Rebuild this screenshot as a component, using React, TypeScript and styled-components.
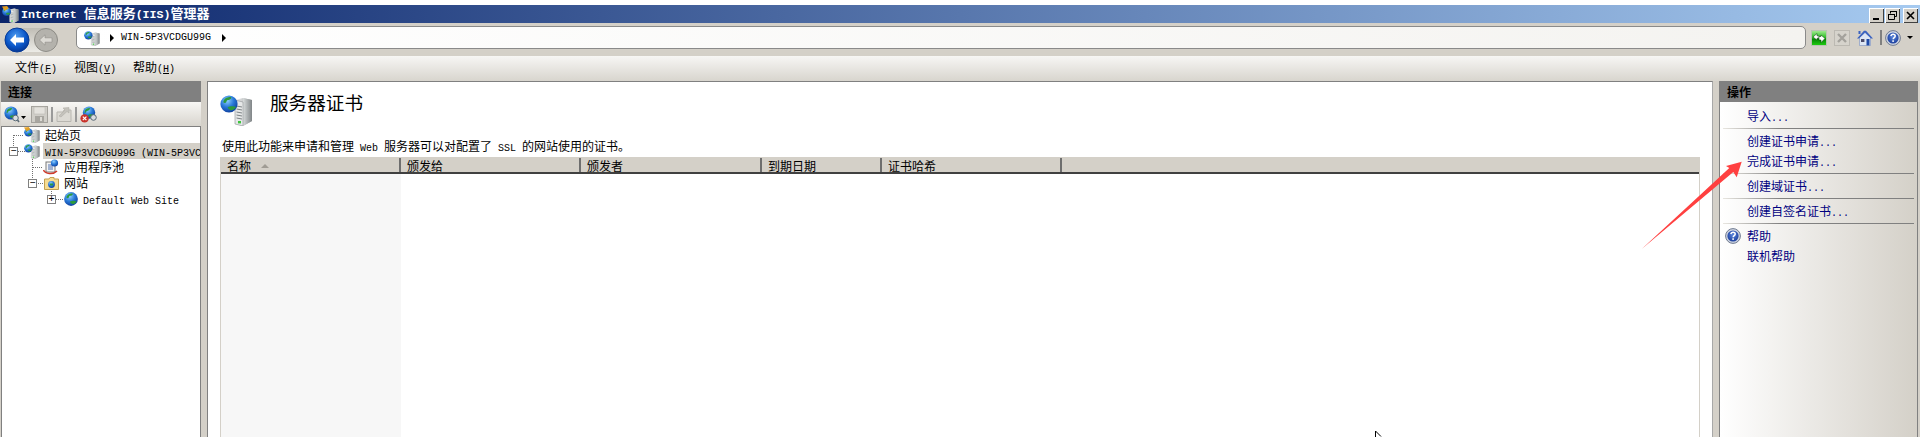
import React from "react";
import styled, { createGlobalStyle } from "styled-components";

const Global = createGlobalStyle`
  html, body { margin: 0; padding: 0; background: #fff; }
  body { font-family: "Noto Sans CJK SC", "Liberation Sans", sans-serif; font-size: 12px; color: #000; }
  * { box-sizing: border-box; }
`;

const Page = styled.div`
  position: relative; width: 1920px; height: 437px; overflow: hidden;
  display: flex; flex-direction: column; background: #d4d0c8; padding-top: 5px;
  box-shadow: inset 0 5px 0 #fff;
`;
const Lat = styled.span`
  font-family: "Liberation Mono", monospace; font-size: 10px;
`;
const TitleBar = styled.div`
  height: 18px; display: flex; align-items: center; padding: 0 2px;
  background: linear-gradient(90deg, #0a246a 0%, #a6caf0 100%); flex: none;
`;
const TitleText = styled.div`
  margin-left: 2px; color: #fff; font-size: 13px; font-weight: 700; line-height: 18px; white-space: pre; flex: 1;
`;
const TitleLat = styled.span`
  font-family: "Liberation Mono", monospace; font-size: 11.6px; font-weight: 700;
`;
const WinButtons = styled.div`
  display: flex; gap: 1px; margin-top: 2px;
`;
const WinBtn = styled.div<{ $mr?: number }>`
  width: 15px; height: 15px; background: #d4d0c8; margin-right: ${p => p.$mr ?? 0}px;
  box-shadow: inset 1px 1px 0 #fff, inset -1px -1px 0 #404040;
  display: flex; align-items: center; justify-content: center;
`;
const NavBar = styled.div`
  height: 33px; flex: none; display: flex; align-items: center; padding-left: 4px; background: #d4d0c8;
`;
const AddressBox = styled.div`
  margin-left: 16px; width: 1730px; height: 23px; border: 1px solid #8a8a8a; border-radius: 5px;
  background: linear-gradient(90deg, #fff, #f4f3f0); display: flex; align-items: center; padding-left: 7px;
  margin-top: -4px;
`;
const Crumb = styled.span`
  font-family: "Liberation Mono", monospace; font-size: 10px; margin: 0 8px 0 7px;
`;
const Tri = styled.span<{ $ml?: number }>`
  width: 0; height: 0; border-left: 4px solid #000; border-top: 4px solid transparent; border-bottom: 4px solid transparent;
  margin-left: ${p => p.$ml ?? 10}px;
`;
const NavTools = styled.div`
  display: flex; align-items: center; margin-left: 5px; margin-top: -4px;
`;
const NavSep = styled.div`
  width: 2px; height: 15px; background: #808080; margin: 0 3px 0 7px;
`;
const DownCaret = styled.span`
  width: 0; height: 0; border-top: 3px solid #000; border-left: 3px solid transparent; border-right: 3px solid transparent; margin-left: 6px;
`;
const MenuBar = styled.div`
  height: 25px; flex: none; display: flex; align-items: center; padding-left: 15px; padding-bottom: 2px; gap: 19px;
  background: linear-gradient(180deg, #f7f6f4 0%, #d8d5ce 100%);
`;
const MenuItem = styled.span`
  font-size: 12px; line-height: 23px; width: 40px; white-space: pre;
`;
const Hot = styled.span` text-decoration: underline; `;
const Main = styled.div`
  flex: 1; display: flex; min-height: 0; padding-right: 2px;
`;
const LeftPanel = styled.div`
  width: 201px; flex: none; display: flex; flex-direction: column; padding-left: 1px;
`;
const PanelHead = styled.div`
  height: 21px; flex: none; background: #808080; font-size: 12px; font-weight: 700; line-height: 21px; padding-left: 7px; color: #000;
`;
const ToolStrip = styled.div`
  height: 25px; flex: none; display: flex; align-items: center; padding-left: 3px;
  background: linear-gradient(180deg, #f8f7f5, #d8d5ce);
  border-bottom: 1px solid #808080;
`;
const ToolSep = styled.div`
  width: 2px; height: 15px; background: #9a9a9a; margin: 0 3px;
`;
const Tree = styled.div`
  position: relative; flex: 1; background: #fff; border-left: 1px solid #808080; border-right: 1px solid #808080;
  overflow: hidden;
`;
const TreeRow = styled.div<{ $indent: number }>`
  height: 16px; display: flex; align-items: center; padding-left: ${p => p.$indent}px; white-space: nowrap; position: relative;
`;
const RowLabel = styled.span<{ $sel?: boolean; $ml?: number }>`
  margin-left: ${p => p.$ml ?? 3}px; padding-left: 2px; height: 16px; line-height: 15px; font-size: 12px; flex: ${p => (p.$sel ? 1 : "none")};
  background: ${p => (p.$sel ? "#d4d0c8" : "transparent")}; overflow: hidden;
`;
const Lines = styled.svg`
  position: absolute; left: 0; top: 0; pointer-events: none;
`;
const Expander = styled.span<{ $left: number }>`
  position: absolute; left: ${p => p.$left}px; width: 9px; height: 9px; top: 4px; background: #fff; border: 1px solid #808080;
  display: flex; align-items: center; justify-content: center; z-index: 1;
  font-family: "Liberation Mono", monospace; font-size: 10px; line-height: 7px;
`;
const Center = styled.div`
  margin-left: 6px; width: 1506px; flex: none; background: #fff; border: 1px solid #808080; border-bottom: 0; border-right-color: #a8a8a8;
  display: flex; flex-direction: column; padding-left: 12px; padding-right: 12px;
`;
const HeadRow = styled.div`
  display: flex; align-items: flex-start; padding-top: 11px; height: 45px; flex: none;
`;
const BigTitle = styled.div`
  margin-left: 17px; font-size: 18.6px; line-height: 22px; margin-top: -2px;
`;
const Desc = styled.div`
  margin-top: 13px; padding-left: 2px; line-height: 11px; height: 14px; flex: none; white-space: pre;
`;
const Table = styled.div`
  margin-top: 3px; flex: 1; display: flex; flex-direction: column; border: 1px solid #d4d0c8; border-bottom: 0; width: 1480px;
`;
const THead = styled.div`
  height: 16px; flex: none; display: flex; background: #d4d0c8; border-bottom: 2px solid #404040;
`;
const Th = styled.div<{ $w?: number }>`
  width: ${p => (p.$w ? `${p.$w}px` : "auto")}; flex: ${p => (p.$w ? "none" : 1)};
  padding-left: 6px; padding-top: 1px; line-height: 14px; font-size: 12px; display: flex; align-items: center;
  border-right: ${p => (p.$w ? "2px solid #6e6e6e" : "0")};
`;
const SortUp = styled.span`
  width: 0; height: 0; margin-left: 10px; border-bottom: 4px solid #a09c94; border-left: 4px solid transparent; border-right: 4px solid transparent;
`;
const TBody = styled.div` flex: 1; display: flex; `;
const FirstCol = styled.div` width: 180px; background: #f7f7f7; `;
const Right = styled.div`
  margin-left: 6px; flex: 1; display: flex; flex-direction: column; border-left: 1px solid #808080; border-right: 1px solid #808080;
`;
const ActionList = styled.div`
  flex: 1; background: linear-gradient(90deg, #fff 0%, #d4d0c8 100%); padding-top: 4px; display: flex; flex-direction: column;
`;
const Action = styled.div`
  height: 20px; flex: none; line-height: 20px; color: #000080; padding-left: 27px; font-size: 12px; position: relative; white-space: pre;
`;
const ActionIcon = styled.span`
  position: absolute; left: 5px; top: 2px; display: flex;
`;
const ActionSep = styled.div`
  height: 1px; margin: 2px 3px 2px 3px; background: linear-gradient(90deg, #e8e6e0, #808080 30%, #808080);
`;
const ArrowMark = styled.svg`
  position: absolute; left: 1640px; top: 158px; pointer-events: none;
`;
const CursorMark = styled.svg`
  position: absolute; left: 1375px; top: 431px; pointer-events: none;
`;
const Gap = styled.span<{ $w: number }>`
  width: ${p => p.$w}px; flex: none;
`;
const HiddenDefs = styled.svg`
  position: absolute; width: 0; height: 0;
`;

const Defs = () => (
  <HiddenDefs>
    <defs>
      <radialGradient id="g" cx="40%" cy="30%" r="75%">
        <stop offset="0" stopColor="#8fd0ff" /><stop offset=".5" stopColor="#2a7ad8" /><stop offset="1" stopColor="#0b3a9a" />
      </radialGradient>
      <linearGradient id="srv" x1="0" x2="1" y1="0" y2="0">
        <stop offset="0" stopColor="#f0f0f0" /><stop offset="1" stopColor="#a0a5a8" />
      </linearGradient>
      <linearGradient id="srvS" x1="0" x2="1" y1="0" y2="0">
        <stop offset="0" stopColor="#d8dcdc" /><stop offset="1" stopColor="#808587" />
      </linearGradient>
      <radialGradient id="bk" cx="45%" cy="35%" r="70%">
        <stop offset="0" stopColor="#4f9cf0" /><stop offset=".6" stopColor="#0a56c8" /><stop offset="1" stopColor="#04308a" />
      </radialGradient>
      <radialGradient id="hp" cx="50%" cy="40%" r="60%">
        <stop offset="0" stopColor="#5a86dd" /><stop offset="1" stopColor="#1c3f9c" />
      </radialGradient>
      <linearGradient id="grn" x1="0" x2="0" y1="0" y2="1">
        <stop offset="0" stopColor="#a8ec98" /><stop offset=".45" stopColor="#30c028" /><stop offset=".6" stopColor="#068a06" /><stop offset="1" stopColor="#20d010" />
      </linearGradient>
      <linearGradient id="pill" x1="0" x2="0" y1="0" y2="1">
        <stop offset="0" stopColor="#c0bdb5" /><stop offset="1" stopColor="#ecebe6" />
      </linearGradient>
    </defs>
  </HiddenDefs>
);

const GlobeShape = () => (
  <>
    <circle cx="9" cy="10" r="8.6" fill="url(#g)" />
    <path d="M4 6c2-3 5-3 7-3 1 1-1 3-3 3s-1 3-3 3-2-1-1-3zM8 13c2-1 6-1 8 0-1 2-4 4-6 3-1-1-3-2-2-3z" fill="#2c9a3c" />
  </>
);

const ServerGlobe = ({ size = 16, badge = false }: { size?: number; badge?: boolean }) => (
  <svg width={size} height={size} viewBox="0 0 33 33">
    <path d="M15 7 L23 5 L32 7 L32 28 L23 33 L15 31 Z" fill="url(#srv)" />
    <path d="M23 5 L32 7 L32 28 L23 33 Z" fill="url(#srvS)" />
    <path d="M15 7 L23 9 L23 33 L15 31 Z" fill="#e6e8e8" stroke="#8d9193" strokeWidth=".6" />
    {[13, 16, 19, 22, 25].map(y => (
      <path key={y} d={`M16.5 ${y} L22 ${y + 1}`} stroke="#7e8486" strokeWidth="1" />
    ))}
    <rect x="18" y="28" width="3" height="2.4" fill="#3dc43d" />
    <g transform="translate(0 1)"><GlobeShape /></g>
    {badge && <path d="M0 1 L10 0 L13 5 L5 9 Z" fill="#e8a020" opacity=".95" />}
  </svg>
);
const Globe = () => (
  <svg width="16" height="16" viewBox="0 0 18 20"><GlobeShape /></svg>
);
const PoolIcon = () => (
  <svg width="16" height="16" viewBox="0 0 16 16">
    <rect x="3" y="3" width="9" height="10" fill="#f4f4f4" stroke="#7a7a7a" />
    <path d="M5 6h5M5 8h5M5 10h5" stroke="#5070b0" />
    <circle cx="11.5" cy="4" r="3.6" fill="url(#g)" />
    <path d="M0.5 11 C2 15 10 16 14 12" fill="none" stroke="#d03a2a" strokeWidth="1.6" />
  </svg>
);
const FolderIcon = () => (
  <svg width="15" height="15" viewBox="0 0 15 15">
    <path d="M0.5 3 L5 3 L6 1.5 L10 1.5 L10 3 L14.5 3 L14.5 13.5 L0.5 13.5 Z" fill="#f6dc92" stroke="#c4a050" />
    <circle cx="7.5" cy="8.5" r="3.4" fill="url(#g)" />
    <path d="M6 7.5h3v2h-3z" fill="#2c9a3c" />
  </svg>
);
const HelpIcon = () => (
  <svg width="16" height="16" viewBox="0 0 16 16">
    <circle cx="8" cy="8" r="7.4" fill="#d0d6e2" stroke="#6f7a90" />
    <circle cx="8" cy="8" r="5.6" fill="url(#hp)" />
    <path d="M5.9 6.2c.2-1.4 1.1-2 2.2-2 1.2 0 2.1.8 2.1 1.8 0 1.6-2 1.6-2 3.2" fill="none" stroke="#fff" strokeWidth="1.5" />
    <rect x="7.3" y="10.3" width="1.6" height="1.6" fill="#fff" />
  </svg>
);
const NavIcons = () => (
  <svg width="56" height="30" viewBox="0 0 56 30">
    <rect x="1" y="3" width="53" height="24" rx="12" fill="url(#pill)" />
    <circle cx="42" cy="15" r="11.5" fill="#b4b2ac" stroke="#8e8c86" />
    <path d="M35.5 15 L41 9.8 L41 12.8 L48 12.8 L48 17.2 L41 17.2 L41 20.2 Z" fill="#dcdad4" stroke="#8e8c86" strokeWidth=".6" />
    <circle cx="13" cy="15" r="12" fill="url(#bk)" stroke="#063a96" />
    <path d="M6 15 L12 9 L12 12.5 L20 12.5 L20 17.5 L12 17.5 L12 21 Z" fill="#fff" />
  </svg>
);
const Refresh = () => (
  <svg width="16" height="16" viewBox="0 0 16 16">
    <rect x=".5" y=".5" width="15" height="15" fill="url(#grn)" stroke="#b9c4b4" />
    <path d="M2 7 L6 3.5 V5.8 H8 V8.2 H6 V10 Z" fill="#fff" stroke="#063a06" strokeWidth=".5" />
    <path d="M14 8.5 L10 12.5 V10 H8 V6.5 H10 V5 Z" fill="#fff" stroke="#063a06" strokeWidth=".5" />
  </svg>
);
const Stop = () => (
  <svg width="16" height="16" viewBox="0 0 16 16">
    <rect x=".5" y=".5" width="15" height="15" fill="#d6d3cc" stroke="#bcb9b2" />
    <path d="M4 4 L12 12 M12 4 L4 12" stroke="#a4a29c" strokeWidth="2.4" />
  </svg>
);
const Home = () => (
  <svg width="16" height="16" viewBox="0 0 16 16">
    <path d="M2.5 7.5 V15.5 H13.5 V7.5 L8 2.5 Z" fill="#dde6f4" stroke="#7890c0" strokeWidth=".6" />
    <path d="M0 8.4 L7 .8 L9 .8 L16 8.4 L14 8.4 L8 2.6 L2 8.4 Z" fill="#3a62c0" />
    <rect x="9.5" y="9" width="3" height="6.4" fill="#1e4aa8" />
    <rect x="4" y="9" width="3.4" height="3" fill="#4a4a6a" />
    <rect x="1.5" y="1" width="2" height="3" fill="#3a62c0" />
  </svg>
);
const ConnectIcon = () => (
  <svg width="22" height="17" viewBox="0 0 22 17">
    <circle cx="7" cy="7" r="6.6" fill="url(#g)" />
    <path d="M3 4c2-2 4-2 5-2 0 2-2 3-3 3s-1 2-2 2 0-2 0-3zM6 10c2-1 4-1 6 0-1 2-3 3-4 2-1 0-2-1-2-2z" fill="#2c9a3c" />
    <circle cx="11.5" cy="12" r="2.8" fill="#d9dde0" stroke="#5a6a76" />
    <path d="M13.5 14 L15 16" stroke="#5a6a76" strokeWidth="1.6" />
    <path d="M17 10 L22 10 L19.5 13 Z" fill="#000" />
  </svg>
);
const DisconnectIcon = () => (
  <svg width="17" height="17" viewBox="0 0 17 17">
    <circle cx="9" cy="6.6" r="6.2" fill="url(#g)" />
    <path d="M5 4c2-2 4-2 5-2 0 2-2 3-3 3s-1 2-2 2 0-2 0-3zM8 9c2-1 4-1 6 0-1 2-3 3-4 2-1 0-2-1-2-2z" fill="#2c9a3c" />
    <circle cx="13.5" cy="11.5" r="2.8" fill="#d9dde0" stroke="#5a6a76" />
    <circle cx="4.6" cy="12.4" r="4.2" fill="#c8322a" />
    <path d="M2.8 10.6 L6.4 14.2 M6.4 10.6 L2.8 14.2" stroke="#fff" strokeWidth="1.2" />
  </svg>
);
const SaveIcon = () => (
  <svg width="17" height="17" viewBox="0 0 17 17">
    <rect x=".5" y=".5" width="16" height="16" fill="#d0cec8" stroke="#a4a29c" />
    <rect x="3" y="1" width="11" height="7" fill="#e4e2dd" stroke="#b4b2ac" strokeWidth=".5" />
    <rect x="4" y="10" width="9" height="6" fill="#a8a6a0" />
    <rect x="9" y="11" width="2" height="4" fill="#dcdad4" />
  </svg>
);
const UpIcon = () => (
  <svg width="16" height="17" viewBox="0 0 16 17">
    <path d="M1 6 L1 15.5 L15 15.5 L15 4 L8 4 L7 6 Z" fill="#dcdad4" stroke="#b8b6b0" />
    <path d="M3 10 L9 4 L7 2 L13 1.5 L13 7 L11 5.5 L5 11 Z" fill="#c4c2bc" stroke="#aaa8a2" strokeWidth=".5" />
  </svg>
);

const TreeConnectors = () => (
  <Lines width="200" height="100">
    <g stroke="#707070" strokeDasharray="1 1" fill="none" shapeRendering="crispEdges">
      <path d="M11.5 8 V20 M11.5 8 H22 M16 24 H23" />
      <path d="M30.5 28 V56 M30.5 40 H41 M36 56 H42" />
      <path d="M49.5 60 V68 M54 72 H61" />
    </g>
  </Lines>
);

export default function App() {
  return (
    <>
      <Global />
      <Defs />
      <Page>
        <TitleBar>
          <ServerGlobe size={17} badge />
          <TitleText>
            <TitleLat>Internet </TitleLat>信息服务<TitleLat>(IIS)</TitleLat>管理器
          </TitleText>
          <WinButtons>
            <WinBtn>
              <svg width="9" height="9" viewBox="0 0 9 9"><rect x="1" y="7" width="6" height="2" fill="#000" /></svg>
            </WinBtn>
            <WinBtn $mr={2}>
              <svg width="9" height="9" viewBox="0 0 9 9"><path d="M2.5 2.5V.5h6v5H6.5M.5 3.5h6v5h-6z" fill="none" stroke="#000" /><path d="M0 3h7v1H0zM2 0h7v1H2z" /></svg>
            </WinBtn>
            <WinBtn>
              <svg width="9" height="9" viewBox="0 0 9 9"><path d="M1 1 L8 8 M8 1 L1 8" stroke="#000" strokeWidth="1.6" /></svg>
            </WinBtn>
          </WinButtons>
        </TitleBar>
        <NavBar>
          <NavIcons />
          <AddressBox>
            <ServerGlobe size={16} />
            <Tri />
            <Crumb>WIN-5P3VCDGU99G</Crumb>
            <Tri $ml={3} />
          </AddressBox>
          <NavTools>
            <Refresh />
            <Gap $w={7} />
            <Stop />
            <Gap $w={7} />
            <Home />
            <NavSep />
            <HelpIcon />
            <DownCaret />
          </NavTools>
        </NavBar>
        <MenuBar>
          <MenuItem>文件<Lat>(<Hot>F</Hot>)</Lat></MenuItem>
          <MenuItem>视图<Lat>(<Hot>V</Hot>)</Lat></MenuItem>
          <MenuItem>帮助<Lat>(<Hot>H</Hot>)</Lat></MenuItem>
        </MenuBar>
        <Main>
          <LeftPanel>
            <PanelHead>连接</PanelHead>
            <ToolStrip>
              <ConnectIcon />
              <Gap $w={5} />
              <SaveIcon />
              <ToolSep />
              <UpIcon />
              <ToolSep />
              <DisconnectIcon />
            </ToolStrip>
            <Tree>
              <TreeConnectors />
              <TreeRow $indent={22}><ServerGlobe size={16} badge /><RowLabel>起始页</RowLabel></TreeRow>
              <TreeRow $indent={22}>
                <Expander $left={7}>−</Expander>
                <ServerGlobe size={16} />
                <RowLabel $sel><Lat>WIN-5P3VCDGU99G (WIN-5P3VCDGU99G\Administrator)</Lat></RowLabel>
              </TreeRow>
              <TreeRow $indent={41}><PoolIcon /><RowLabel>应用程序池</RowLabel></TreeRow>
              <TreeRow $indent={42}>
                <Expander $left={26}>−</Expander>
                <FolderIcon />
                <RowLabel>网站</RowLabel>
              </TreeRow>
              <TreeRow $indent={61}>
                <Expander $left={45}>+</Expander>
                <Globe />
                <RowLabel $ml={2}><Lat>Default Web Site</Lat></RowLabel>
              </TreeRow>
            </Tree>
          </LeftPanel>
          <Center>
            <HeadRow>
              <ServerGlobe size={33} />
              <BigTitle>服务器证书</BigTitle>
            </HeadRow>
            <Desc>使用此功能来申请和管理<Lat> Web </Lat>服务器可以对配置了<Lat> SSL </Lat>的网站使用的证书。</Desc>
            <Table>
              <THead>
                <Th $w={180}>名称<SortUp /></Th>
                <Th $w={180}>颁发给</Th>
                <Th $w={181}>颁发者</Th>
                <Th $w={120}>到期日期</Th>
                <Th $w={180}>证书哈希</Th>
                <Th />
              </THead>
              <TBody><FirstCol /></TBody>
            </Table>
          </Center>
          <Right>
            <PanelHead>操作</PanelHead>
            <ActionList>
              <Action>导入<Lat>...</Lat></Action>
              <ActionSep />
              <Action>创建证书申请<Lat>...</Lat></Action>
              <Action>完成证书申请<Lat>...</Lat></Action>
              <ActionSep />
              <Action>创建域证书<Lat>...</Lat></Action>
              <ActionSep />
              <Action>创建自签名证书<Lat>...</Lat></Action>
              <ActionSep />
              <Action><ActionIcon><HelpIcon /></ActionIcon>帮助</Action>
              <Action>联机帮助</Action>
            </ActionList>
          </Right>
        </Main>
        <ArrowMark width="110" height="95" viewBox="0 0 110 95">
          <path d="M1.7 91 L89.3 10 L86 8 L101.7 3.7 L96.7 19.3 L93.3 14 Z" fill="#ff4040" />
        </ArrowMark>
        <CursorMark width="10" height="6" viewBox="0 0 10 6">
          <path d="M.5 0 V6 M.5 0 L6 5.5" stroke="#000" fill="none" />
        </CursorMark>
      </Page>
    </>
  );
}
